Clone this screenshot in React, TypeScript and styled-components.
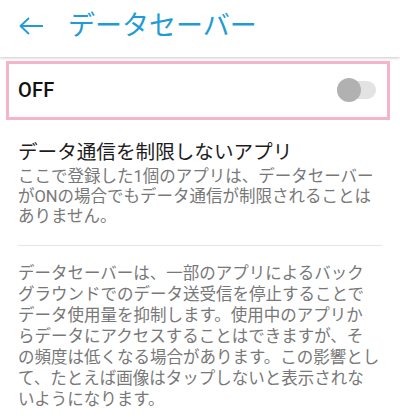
import styled, { createGlobalStyle } from 'styled-components';

const GlobalStyle = createGlobalStyle`
  html, body {
    margin: 0;
    padding: 0;
    background: #ffffff;
  }
  body {
    font-family: Roboto, "Noto Sans CJK JP", sans-serif;
  }
`;

const descLines = [
  'ここで登録した1個のアプリは、データセーバー',
  'がONの場合でもデータ通信が制限されることは',
  'ありません。',
];

const footerLines = [
  'データセーバーは、一部のアプリによるバック',
  'グラウンドでのデータ送受信を停止することで',
  'データ使用量を抑制します。使用中のアプリか',
  'らデータにアクセスすることはできますが、そ',
  'の頻度は低くなる場合があります。この影響とし',
  'て、たとえば画像はタップしないと表示されな',
  'いようになります。',
];

const BackArrow = () => (
  <svg width="24" height="24" viewBox="0 0 24 24" fill="none">
    <path
      d="M1.5 12 H23.5 M9.5 4.5 L1.5 12 L9.5 19.5"
      stroke="#1f9bd6"
      strokeWidth="1.8"
      strokeLinecap="round"
      strokeLinejoin="round"
    />
  </svg>
);

const App = () => {
  return (
    <Page>
      <GlobalStyle />
      <Header>
        <BackButton>
          <BackArrow />
        </BackButton>
        <Title>データセーバー</Title>
      </Header>
      <MasterSwitch>
        <SwitchLabel>OFF</SwitchLabel>
        <Toggle>
          <Thumb />
        </Toggle>
      </MasterSwitch>
      <Section>
        <ItemTitle>データ通信を制限しないアプリ</ItemTitle>
        <Summary>
          {descLines.map((line, i) => (
            <span key={i}>
              {line}
              {i < descLines.length - 1 && <br />}
            </span>
          ))}
        </Summary>
      </Section>
      <Divider />
      <Footer>
        {footerLines.map((line, i) => (
          <span key={i}>
            {line}
            {i < footerLines.length - 1 && <br />}
          </span>
        ))}
      </Footer>
    </Page>
  );
};

const Page = styled.div`
  width: 400px;
  height: 417px;
  overflow: hidden;
  background: #ffffff;
`;

const Header = styled.div`
  height: 57px;
  box-sizing: border-box;
  padding: 0 0 5px 19px;
  display: flex;
  align-items: center;
  background: #ffffff;
  box-shadow: 0 1px 3px rgba(0, 0, 0, 0.22);
  position: relative;
  z-index: 1;
`;

const BackButton = styled.div`
  width: 24px;
  height: 24px;
  display: flex;
  margin-right: 25px;
`;

const Title = styled.div`
  font-size: 27px;
  line-height: 32px;
  color: #1f9bd6;
  letter-spacing: 0;
`;

const MasterSwitch = styled.div`
  margin: 4px 10px 0 6px;
  height: 59px;
  box-sizing: border-box;
  border: 3px solid #f4b4cb;
  display: flex;
  align-items: center;
  justify-content: space-between;
  padding: 0 11px 1px 9px;
`;

const SwitchLabel = styled.div`
  font-size: 20px;
  font-weight: 500;
  color: #111111;
  letter-spacing: 0.2px;
`;

const Toggle = styled.div`
  width: 39px;
  height: 18px;
  border-radius: 9px;
  background: #e3e3e3;
  position: relative;
`;

const Thumb = styled.div`
  position: absolute;
  left: 0;
  top: -3px;
  width: 24px;
  height: 24px;
  border-radius: 50%;
  background: #b1b1b1;
`;

const Section = styled.div`
  padding: 21px 0 0 18px;
`;

const ItemTitle = styled.div`
  font-size: 19.6px;
  line-height: 24px;
  color: #1c1c1c;
  white-space: nowrap;
`;

const Summary = styled.div`
  margin-top: 2px;
  font-size: 16.5px;
  line-height: 20px;
  color: #787878;
  white-space: nowrap;
`;

const Divider = styled.div`
  margin: 18px 18px 0 18px;
  height: 1px;
  background: #e6e6e6;
`;

const Footer = styled.div`
  padding: 17px 0 0 18px;
  font-size: 16.5px;
  line-height: 21px;
  color: #787878;
  white-space: nowrap;
`;

export default App;
